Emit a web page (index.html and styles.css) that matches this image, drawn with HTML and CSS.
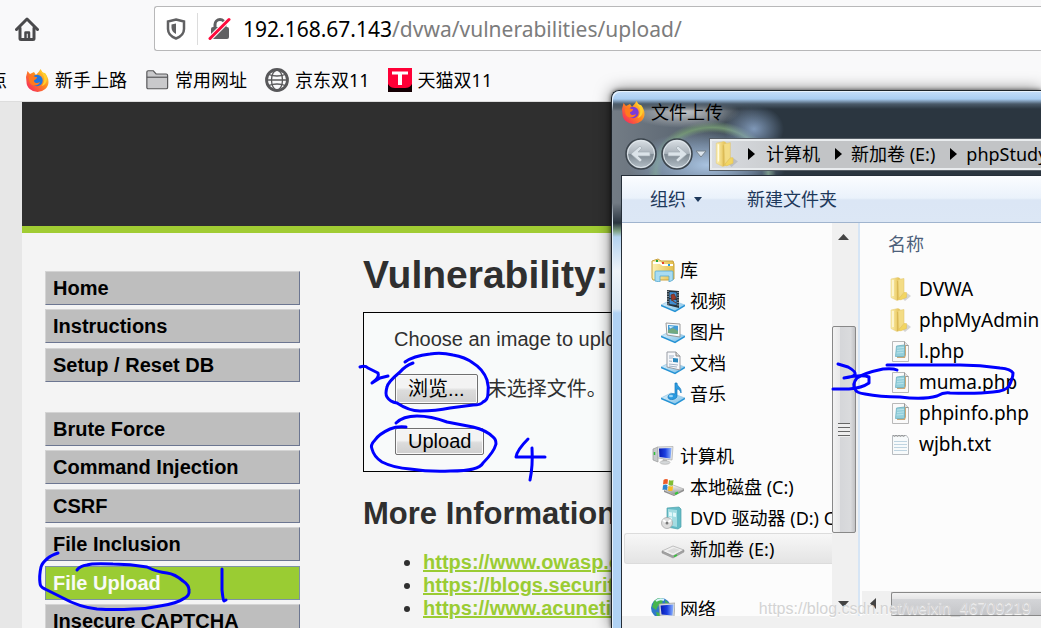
FILE: index.html
```html
<!DOCTYPE html>
<html lang="zh-CN">
<head>
<meta charset="utf-8">
<title>Vulnerability: File Upload</title>
<link rel="stylesheet" href="styles.css">
</head>
<body>
<svg class="defs" aria-hidden="true">
  <defs>
    <linearGradient id="gold" x1="0" x2="1"><stop offset="0" stop-color="#fdf1b4"/><stop offset="1" stop-color="#e3bd49"/></linearGradient>
    <linearGradient id="flame" x1="1" y1="0" x2="0" y2="1"><stop offset="0" stop-color="#ffec3d"/><stop offset=".45" stop-color="#ff8a1c"/><stop offset="1" stop-color="#f5156c"/></linearGradient>
    <linearGradient id="tray" x1="0" x2="1" y2="1"><stop offset="0" stop-color="#e8f6fd"/><stop offset="1" stop-color="#74bce6"/></linearGradient>
    <linearGradient id="screen" x1="0" x2="1"><stop offset="0" stop-color="#0719b0"/><stop offset=".5" stop-color="#1b3fe0"/><stop offset="1" stop-color="#8fb6ff"/></linearGradient>
    <linearGradient id="metal" x2="0" y2="1"><stop offset="0" stop-color="#f7f7f7"/><stop offset="1" stop-color="#909090"/></linearGradient>
    <linearGradient id="orb" x2="0" y2="1"><stop offset="0" stop-color="#dce2e7"/><stop offset=".48" stop-color="#a9b2ba"/><stop offset=".52" stop-color="#7e8992"/><stop offset="1" stop-color="#b9c4cc"/></linearGradient>
  </defs>
  <symbol id="i-folder" viewBox="0 0 24 24">
    <path d="M14 21l5-5 4 3-6 5z" fill="#999" opacity=".4"/>
    <path d="M3 2l7-1.500 2 1v21l-3 1-6-3z" fill="url(#gold)" stroke="#e3c970" stroke-width=".5"/>
    <path d="M10 2.500l6-1v14l-5 6z" fill="#f3dc85" stroke="#dfc268" stroke-width=".5"/>
    <path d="M9.500 4v19" stroke="#d9b854" fill="none"/>
    <path d="M11 21.500l5-6h2.500v5l-6 2.500z" fill="#f2d561" stroke="#e0bf57" stroke-width=".5"/>
    <path d="M5 3v16" stroke="#fffbe0" stroke-width="1.400"/>
  </symbol>
  <symbol id="i-php" viewBox="0 0 24 24">
    <path d="M4.500 2.500h12l4 4v16h-16z" fill="#fafafa" stroke="#b9b9b9"/>
    <path d="M16.500 2.500v4h4" fill="#e2e2e2" stroke="#999"/>
    <path d="M10 7l8-1v10l-1 3H9z" fill="#c9a878"/>
    <path d="M8.500 7l8-1v10.500l-1 1h-8z" fill="#93cfdb" stroke="#6fb1c2" stroke-width=".8"/>
    <path d="M9 9l7-.6M9 11.500l7-.6M8.500 14l7-.6" stroke="#b9e2ea"/>
  </symbol>
  <symbol id="i-txt" viewBox="0 0 24 24">
    <path d="M4.500 3.500h14l2 3v16h-16z" fill="#f7fafb" stroke="#b8bcc0"/>
    <path d="M5 3l1.500 2L8 3l1.500 2L11 3l1.500 2L14 3l1.500 2L17 3" fill="none" stroke="#888" stroke-width=".7"/>
    <path d="M6 9.500h13M6 12.500h13M6 15.500h13M6 18.500h13" stroke="#bfd4e1"/>
  </symbol>
  <symbol id="i-firefox" viewBox="0 0 24 24">
    <path d="M1 9L2.500 3 5 6l4-2 2 3 3-3.500L15.500 1 18 5l2 0c2 3 3.500 5 3.500 9a11 10 0 0 1-22 0z" fill="url(#flame)"/>
    <circle cx="12" cy="12.500" r="5.700" class="globe-core"/>
    <path d="M4 9c4-3 5 0 8 0 0 3-3 2-3 4 1 3 4 2 6 1-1 4-7 5-10 1-1-2-1-4-1-6z" fill="#ff7a1e"/>
    <path d="M14.500 3c6 4 6 11 2 15 6-1 7-10 3-13z" fill="#ffd02e"/>
  </symbol>
  <symbol id="i-tray" viewBox="0 0 24 24">
    <path d="M0 16l10-5 14 5-10 6z" fill="url(#tray)" stroke="#91c3e2" stroke-width=".7"/>
    <path d="M0 16.500l14 6 10-6" fill="none" stroke="#2593d5" stroke-width="1.500"/>
  </symbol>
</svg>

<header class="chrome">
  <div class="navbar">
    <button class="home" aria-label="主页">
      <svg width="24" height="24" viewBox="0 0 24 24" fill="none" stroke="#4a4a4c" stroke-width="3" stroke-linejoin="round" stroke-linecap="round"><path d="M1.500 12.500L12 2l10.500 10.500"/><path d="M5 11v10.500q0 1 1 1h12q1 0 1-1V11"/><path d="M10.500 22v-6.500h3.500V22" stroke-width="2.500"/></svg>
    </button>
    <div class="urlbar">
      <svg width="20" height="22" viewBox="0 0 20 22"><path d="M10 1.500L18 3.500V11c0 5-4 8-8 9.500C6 19 2 16 2 11V3.500z" fill="none" stroke="#606062" stroke-width="2.500"/><path d="M10 5.500V16c-3-1.500-4.500-3.500-4.500-6.500v-3z" fill="#606062"/></svg>
      <span class="divider"></span>
      <svg width="24" height="24" viewBox="0 0 24 24"><path d="M7 11V7.500a5 5 0 0 1 10 0V11" fill="none" stroke="#606062" stroke-width="3"/><rect x="3" y="10" width="18" height="12" rx="2" fill="#606062"/><path d="M2 21.500L21 2.500" stroke="#fff" stroke-width="5"/><path d="M2 21.500L21 2.500" stroke="#ff0a3c" stroke-width="3" stroke-linecap="round"/></svg>
      <div class="url" role="textbox" aria-label="地址" contenteditable="true" spellcheck="false"><b>192.168.67.143</b>/dvwa/vulnerabilities/upload/</div>
    </div>
  </div>
  <nav class="bookmarks">
    <a href="#" class="clipped">点</a>
    <a href="#"><svg class="ff-old" width="24" height="24"><use href="#i-firefox"/></svg>新手上路</a>
    <a href="#"><svg width="24" height="24" viewBox="0 0 26 24"><path d="M2 3.500Q2 2 3.500 2H9l3 3.500h11Q24.500 5.500 24.500 7v13q0 1.500-1.500 1.500H3.500Q2 21.500 2 20z" fill="#c9c9cb" stroke="#58585a" stroke-width="1.300"/><path d="M2 9h22.500" stroke="#58585a" stroke-width="1.300"/></svg>常用网址</a>
    <a href="#"><svg width="24" height="24" viewBox="0 0 24 24" fill="none" stroke="#58585a"><circle cx="12" cy="12" r="10.500" stroke-width="2.800"/><g stroke-width="1.300"><ellipse cx="12" cy="12" rx="5.500" ry="10"/><path d="M2 12h20M4 6.500c4 2 12 2 16 0M4 17.500c4-2 12-2 16 0"/></g></svg>京东双11</a>
    <a href="#"><svg width="24" height="24" viewBox="0 0 24 24"><path fill="#ff0036" d="M0 0h24v24H0z"/><path d="M0 16c2 3 4 4 7 4h10c3 0 5-1 7-4v8H0z" fill="#150003"/><path d="M4 3.500h16v3h-6V17h-4V6.500H4z" fill="#fff"/></svg>天猫双11</a>
  </nav>
</header>

<div class="site">
  <div class="banner"></div>
  <div class="columns">
    <nav class="menu">
      <ul>
        <li><a href="#">Home</a></li>
        <li><a href="#">Instructions</a></li>
        <li><a href="#">Setup / Reset DB</a></li>
      </ul>
      <ul>
        <li><a href="#">Brute Force</a></li>
        <li><a href="#">Command Injection</a></li>
        <li><a href="#">CSRF</a></li>
        <li><a href="#">File Inclusion</a></li>
        <li><a href="#" class="selected">File Upload</a></li>
        <li><a href="#">Insecure CAPTCHA</a></li>
      </ul>
    </nav>
    <main class="content">
      <h1>Vulnerability:</h1>
      <form class="upload" onsubmit="return false">
        <p>Choose an image to upload:</p>
        <div class="picker"><button type="button" id="browse">浏览...</button><label for="browse">未选择文件。</label></div>
        <button class="submit">Upload</button>
      </form>
      <h2>More Information</h2>
      <ul class="links">
        <li><a href="#">https://www.owasp.org</a></li>
        <li><a href="#">https://blogs.securiteam.com</a></li>
        <li><a href="#">https://www.acunetix.com</a></li>
      </ul>
    </main>
  </div>
</div>

<section class="dialog" role="dialog" aria-labelledby="dlg-title">
  <div class="glass-blur"></div>
  <div class="titlebar"><svg width="24" height="24"><use href="#i-firefox"/></svg><span id="dlg-title">文件上传</span></div>
  <div class="addressrow">
    <button class="orb" aria-label="后退"><svg width="32" height="32" viewBox="0 0 32 32"><circle cx="16" cy="16" r="15" fill="url(#orb)" stroke="#3b444c" stroke-width="1.500"/><circle cx="16" cy="16" r="13.500" fill="none" stroke="#dfe6eb"/><path d="M6 16l9-8 2 2-4 4h12v4H13l4 4-2 2z" fill="#dbe3e9" stroke="#a3adb5" stroke-width=".7"/></svg></button>
    <button class="orb" aria-label="前进"><svg width="32" height="32" viewBox="0 0 32 32"><circle cx="16" cy="16" r="15" fill="url(#orb)" stroke="#3b444c" stroke-width="1.500"/><circle cx="16" cy="16" r="13.500" fill="none" stroke="#dfe6eb"/><path d="M26 16l-9-8-2 2 4 4H7v4h12l-4 4 2 2z" fill="#dbe3e9" stroke="#a3adb5" stroke-width=".7"/></svg></button>
    <svg class="recent" width="12" height="8" viewBox="0 0 12 8"><path d="M1 1h10L6 7z" fill="#dce4ec" stroke="#77838d"/></svg>
    <div class="crumbs">
      <svg width="28" height="26" viewBox="0 0 24 24"><use href="#i-folder"/></svg>
      <i></i><button>计算机</button><i></i><button>新加卷 (E:)</button><i></i><button>phpStudy</button>
    </div>
  </div>
  <div class="client">
    <div class="commands"><button>组织<svg width="8" height="5" viewBox="0 0 8 5"><path d="M0 0h8L4 5z" fill="#1e395b"/></svg></button><button>新建文件夹</button></div>
    <div class="panes">
      <div class="tree">
        <a href="#" class="root"><svg width="24" height="24" viewBox="0 0 24 24"><path d="M1 3l6-2 3 2h12l1 3v15l-3 1H2l-1-2z" fill="url(#gold)" stroke="#c9a23f"/><path d="M2 5h7l3 2h10" stroke="#fff" stroke-width="2"/><path d="M5 2h2v2H5z" fill="#21a43b"/><path d="M11 4h2v2h-2z" fill="#e6422d"/><path d="M17 6h2v2h-2z" fill="#259de1"/><path d="M4 14q0-1 1-1h16q1 0 1 1v8l-4 2v-6H9v6l-5-1z" fill="#a9dcf2" stroke="#55a8d2" stroke-width=".8"/></svg>库</a>
        <a href="#"><svg width="24" height="24" viewBox="0 0 24 24"><use href="#i-tray"/><path d="M6 1l12 1v17L6 16z" fill="#26323b"/><path d="M8.500 3l7 .5v6l-7-.5zM8.500 10l7 1v5l-7-1z" fill="#3f8ed3"/><path d="M10 6l3-1 2 4-4 3zM12 12l3 2" fill="#9b3b2b" stroke="#72362b"/><path d="M7 2v14M17 3v15" stroke="#dde9ee" stroke-dasharray="1 1.500"/></svg>视频</a>
        <a href="#"><svg width="24" height="24" viewBox="0 0 24 24"><use href="#i-tray"/><path d="M5 3l14 1v13L6 15z" fill="#f8fafb" stroke="#999"/><path d="M7 5l10 .7V14L7 13z" fill="#419bd6"/><path d="M7 10l5-2 5 3v3L7 13z" fill="#72a980"/><path d="M8 6l5 .5-4 2z" fill="#d4effb"/></svg>图片</a>
        <a href="#"><svg width="24" height="24" viewBox="0 0 24 24"><use href="#i-tray"/><path d="M6 1h9l4 4v14L6 16z" fill="#f7f8fb" stroke="#999da5"/><path d="M15 1v4h4" fill="#ddd" stroke="#888"/><path d="M8 5h5M8 7h4M8 10l3 .3M8 13l9 1M8 15l8 1" stroke="#8aa0b8" stroke-width=".8"/><path d="M12 7l5 .5v4l-5-.5z" fill="#2b88bd"/></svg>文档</a>
        <a href="#"><svg width="24" height="24" viewBox="0 0 24 24"><use href="#i-tray"/><path d="M14 1h2c0 4 5 4 4 10-1-3-2-4-4-4v7c0 4-9 5-9 1 0-3 4-4 7-3z" fill="#2c9be0" stroke="#1678bc" stroke-width=".7"/><ellipse cx="10" cy="14" rx="2" ry="1.200" fill="#9bd7fa"/></svg>音乐</a>
        <a href="#" class="root group"><svg width="24" height="24" viewBox="0 0 24 24"><path d="M2 5l5-2v15l-5-2z" fill="#c5c9cb" stroke="#999" stroke-width=".7"/><path d="M3.500 8v3" stroke="#2fbf3a" stroke-width="1.500"/><path d="M6.500 3L22 2.500 21 16 7 14z" fill="#e3e6e8" stroke="#aaa" stroke-width=".7"/><path d="M8 4.500L20.500 4l-1 10.500L8.500 13z" fill="url(#screen)"/><path d="M12 15l4 .5v3H11z" fill="#bbb"/><ellipse cx="14" cy="18.500" rx="5" ry="1.800" fill="#d5d8da" stroke="#aaa" stroke-width=".6"/></svg>计算机</a>
        <a href="#"><svg width="24" height="24" viewBox="0 0 24 24"><path d="M3 14l9-4 11 4-10 6z" fill="url(#metal)" stroke="#aaa" stroke-width=".7"/><path d="M3 15v2l10 4 10-5v-2l-10 6z" fill="#8f8f8f"/><path d="M14 19l3-1.500" stroke="#35c63a" stroke-width="2"/><path d="M2.500 5q2-1.500 4.500-.500L6.500 9Q4 8.500 2 9.500z" fill="#ed5b28"/><path d="M8 5q2 1 4.500 0l-.5 5q-2 1-4.500 0z" fill="#80bd35"/><path d="M2 10.500q2-1.500 4.500-.500L6 15q-2.500-1-4.500 0z" fill="#2c86d1"/><path d="M7.500 11q2 1 4.500 0l-.5 4.500q-2 1-4.500 0z" fill="#f9bd22"/></svg>本地磁盘 (C:)</a>
        <a href="#"><svg width="24" height="24" viewBox="0 0 24 24"><path d="M6 2l12-1 2 2v18l-3 2-11-2z" fill="#65bcc7" stroke="#4da0ab" stroke-width=".7"/><path d="M7 3l9 1v17l-9-2z" fill="#a3dce2"/><path d="M8 6l3 .4v4l-3-.4zM12 6.500l3 .4v4l-3-.4zM8 11l3 .4v4l-3-.4z" fill="#dff8fa"/><circle cx="6" cy="17" r="5.500" fill="#dedede" stroke="#a1a1a1" stroke-width=".7"/><path d="M6 17L2 14M6 17l4-3" stroke="#fff" stroke-width="2"/><circle cx="6" cy="17" r="1.500" fill="#777"/></svg>DVD 驱动器 (D:) CD</a>
        <a href="#" class="current"><svg width="24" height="24" viewBox="0 0 24 24"><path d="M1 14l11-5 11 4-11 6z" fill="#efefef" stroke="#aaa" stroke-width=".7"/><path d="M1 14v2l11 5 11-6v-2l-11 6z" fill="#a3a3a3" stroke="#888" stroke-width=".5"/><path d="M6 14l7-3 6 2-7 3.500z" fill="#dcdcdc"/><path d="M13 19.500l3-1.500" stroke="#35c63a" stroke-width="1.500"/></svg>新加卷 (E:)</a>
        <a href="#" class="root group"><svg width="24" height="24" viewBox="0 0 24 24"><circle cx="10" cy="11" r="10" fill="#2f78c9"/><path d="M3 4q5-5 9-2l-1 5-4 2-2 4-4-3zM14 3l5 4-4 3zM5 15l4 1 2 5-5-2z" fill="#45b54e"/><path d="M5 4q4-3 8-1" stroke="#d8f6fc" stroke-width="2" fill="none"/><path d="M8 7l16-1-1 14-14-1z" fill="#d9dddf" stroke="#999" stroke-width=".7"/><path d="M9.500 8.500L22.500 7.500l-1 11-11-1z" fill="url(#screen)"/><path d="M14 20h4v2h-5z" fill="#aaa"/></svg>网络</a>
      </div>
      <div class="vscroll"><svg width="12" height="7" viewBox="0 0 12 7"><path d="M0 6h11L5.500 0z" fill="#444"/></svg><div class="thumb"><i></i></div><svg width="12" height="7" viewBox="0 0 12 7"><path d="M0 0h11L5.500 6z" fill="#444"/></svg></div>
      <div class="files">
        <div class="colhead">名称</div>
        <ul>
          <li><svg width="24" height="24"><use href="#i-folder"/></svg>DVWA</li>
          <li><svg width="24" height="24"><use href="#i-folder"/></svg>phpMyAdmin</li>
          <li><svg width="24" height="24"><use href="#i-php"/></svg>l.php</li>
          <li><svg width="24" height="24"><use href="#i-php"/></svg>muma.php</li>
          <li><svg width="24" height="24"><use href="#i-php"/></svg>phpinfo.php</li>
          <li><svg width="24" height="24"><use href="#i-txt"/></svg>wjbh.txt</li>
        </ul>
        <div class="hscroll"><svg width="7" height="12" viewBox="0 0 7 12"><path d="M6 0v11L0 5.500z" fill="#444"/></svg><div class="thumb"></div></div>
      </div>
    </div>
    <div class="footer"></div>
  </div>
</section>

<svg class="ink" width="1041" height="628" viewBox="0 0 1041 628" aria-hidden="true">
  <path d="M58 553Q50 556 48 558Q42 563 41 567Q39 576 40 583Q40 587 45 589L63 598Q79 607 97 609Q115 610 133 609Q147 609 160 606Q178 603 183 599Q190 596 189 590Q189 585 183 581Q175 574 167 573Q157 572 147 567Q130 564 113 564Q92 563 87 565Q80 566 77 570"/>
  <path d="M222 569L222 590Q223 600 224 601L226 600"/>
  <path d="M360 367Q365 365 368 368L378 373Q380 377 372 383L380 378L388 376"/>
  <path d="M413 363Q405 366 400 372Q388 382 387 387Q385 394 387 397Q390 402 397 403Q409 411 420 411Q436 411 450 408L473 405Q481 405 483 402Q488 400 488 393Q489 387 487 380Q483 369 473 363Q465 357 453 355Q441 352 430 354Q413 356 405 362"/>
  <path d="M406 427Q397 426 390 429Q379 434 375 440Q370 445 372 449Q374 457 382 462Q394 468 410 469Q430 472 450 471Q466 471 473 469Q481 467 483 463Q494 452 496 444Q496 439 493 437Q486 430 473 427L447 422Q431 416 417 416Q403 416 396 423"/>
  <path d="M528 439Q517 450 516 457L545 457M532 448Q533 466 530 480"/>
  <path d="M838 364L848 367Q864 376 844 378Q862 374 869 377V383Q862 388 849 389H833"/>
  <path d="M897 370Q893 368 883 369Q864 373 857 378Q852 384 855 389Q856 393 865 394Q880 397 900 397Q923 400 937 396Q944 392 950 393Q977 394 993 392Q1006 391 1009 386Q1013 378 1013 373Q1011 369 1000 368Q980 365 960 365H887"/>
</svg>
<div class="watermark">https://blog.csdn.net/weixin_46709219</div>
</body>
</html>
```
FILE: styles.css
```css
* { box-sizing: border-box; }
html, body { height: 100%; }
body {
  margin: 0;
  position: relative;
  display: flex;
  flex-direction: column;
  overflow: hidden;
  background: #e7e7e7;
  color: #000;
  font: 18px/24px "Noto Sans", "Noto Sans CJK SC", sans-serif;
}
svg { display: block; flex: none; }
a { color: inherit; text-decoration: none; }
button { border: 0; padding: 0; background: none; font: inherit; color: inherit; white-space: nowrap; }
ul { margin: 0; padding: 0; list-style: none; }
.defs { position: absolute; width: 0; height: 0; }
.globe-core { fill: var(--globe, #7a3bd8); }
.ff-old { --globe: #2177e0; }

/* Browser toolbar */
.chrome { flex: none; background: #f9f9fa; border-bottom: 1px solid #ddd; }
.navbar { display: flex; align-items: center; padding: 6px 0 0 15px; }
.home { margin-right: 115px; }
.urlbar {
  flex: 1;
  display: flex;
  align-items: center;
  height: 45px;
  padding-left: 11px;
  background: #fff;
  border: 1px solid #b8b8b9;
  border-right: 0;
  border-radius: 3px 0 0 3px;
}
.divider { width: 1px; height: 32px; margin: 0 10px 0 11px; background: #dcdcdc; }
.url { margin-left: 11px; color: #7c7c7c; font-size: 21px; line-height: 30px; white-space: nowrap; }
.url b { color: #000; font-weight: 400; }
.bookmarks { display: flex; align-items: center; gap: 18px; height: 50px; padding-top: 8px; }
.bookmarks a { display: flex; align-items: center; gap: 6px; white-space: nowrap; }
.bookmarks .clipped { margin-left: -11px; }

/* Site */
.site {
  flex: 1;
  min-height: 0;
  overflow: hidden;
  margin-left: 22px;
  background: #f4f4f4;
  color: #2f2f2f;
  font: 20px/23px "Liberation Sans", Arial, "Noto Sans CJK SC", sans-serif;
}
.banner { height: 131px; background: #2f2f2f; border-bottom: 7px solid #a1cc33; }
.columns { display: flex; padding-left: 23px; }
.menu { flex: none; width: 255px; padding-top: 38px; margin-right: 63px; }
.menu ul { margin-bottom: 30px; }
.menu li { margin-bottom: 4px; }
.menu li:nth-child(even) { margin-bottom: 5px; }
.menu li:last-child { margin-bottom: 0; }
.menu a {
  display: block;
  height: 34px;
  padding: 5px 7px 4px;
  background: #bebebe;
  border: 1px solid;
  border-color: #d4d4d4 #6c7691 #6c7691 #d4d4d4;
  color: #000;
  font-weight: 700;
}
.menu .selected { background: #9acc33; border-color: #7c92a4; color: #f8faf6; }
.content { flex: 1; min-width: 0; }
.content h1 { margin: 20px 0 15px; font-size: 39px; line-height: 44px; }
.upload { height: 160px; padding: 15px 30px; background: #f8fafa; border: 1px solid #000; }
.upload p { margin: 0 0 23px; }
.picker { display: flex; align-items: center; gap: 9px; height: 30px; margin-bottom: 24px; }
.upload button {
  height: 30px;
  padding: 0 12px;
  margin-left: 1px;
  border: 1px solid #707070;
  border-radius: 2px;
  background: linear-gradient(#f3f3f3 45%, #dcdcdc 55%, #cfcfcf);
  box-shadow: inset 0 0 0 1px #fafafa;
  color: #000;
  line-height: 26px;
}
.upload .submit { display: block; height: 27px; line-height: 23px; }
.content h2 { margin: 24px 0 19px; font-size: 31px; line-height: 36px; }
.links { padding-left: 60px; list-style: disc; }
.links a { color: #9acc33; font-weight: 700; text-decoration: underline; }

/* File chooser window */
.dialog {
  position: absolute;
  inset: 90px 0 0 611px;
  overflow: hidden;
  display: flex;
  flex-direction: column;
  padding-left: 9px;
  border: 1px solid #1d2329;
  border-width: 1px 0 0 1px;
  border-radius: 8px 0 0 0;
  background: linear-gradient(#c5defa 0, #a9cdf2 8px, #4a5a69 13px, #2b3640 18px, #2b3640 132px, #7ea183 140px, #b3d2ef 146px, #eef3f8 180px, #dae7f4 218px, #b0d2f4 222px);
  box-shadow: 0 0 4px rgba(0, 0, 0, .6), 0 0 16px rgba(0, 0, 0, .5);
}
.dialog::before { content: ""; position: absolute; inset: 0; border-radius: inherit; box-shadow: inset 1px 1px #e6f1fc; }
.glass-blur {
  position: absolute;
  inset: 12px 0 auto 0;
  height: 120px;
  background:
    radial-gradient(ellipse 56px 16px at 72px 9px, #c2c4c6, rgba(160, 165, 170, .6) 60%, transparent),
    radial-gradient(ellipse 30px 24px at 142px 26px, rgba(136, 162, 196, .9), transparent),
    radial-gradient(ellipse 80px 34px at 95px 62px, #a9c3e0, rgba(140, 165, 195, .6) 60%, transparent),
    radial-gradient(ellipse 64px 54px at 100px 72px, transparent 78%, #729373 88%, transparent),
    linear-gradient(90deg, #737c85, #5d6874 70px, transparent 150px);
  mask: linear-gradient(transparent, #000 8px, #000 100px, transparent);
}
.titlebar, .addressrow, .client { position: relative; }
.titlebar { display: flex; align-items: center; gap: 6px; height: 42px; }
.addressrow { display: flex; align-items: center; height: 42px; padding-left: 4px; }
.orb { margin-right: 4px; }
.recent { margin: 0 3px 0 -2px; }
.crumbs {
  flex: 1;
  display: flex;
  align-items: center;
  height: 31px;
  overflow: hidden;
  background: linear-gradient(90deg, #d9dce0, #c2c4c6 100px);
  border: 2px solid #e9ecee;
  border-right: 0;
  outline: 1px solid #555d65;
}
.crumbs i { flex: none; margin: 0 9px 0 15px; border: solid transparent; border-width: 6px 0 6px 7px; border-left-color: #000; }
.crumbs svg + i { margin-left: 8px; margin-right: 11px; }
.client {
  flex: 1;
  min-height: 0;
  display: flex;
  flex-direction: column;
  border: 1px solid #252e38;
  border-width: 1px 0 0 1px;
  background: #fcfcfc;
}
.commands {
  flex: none;
  display: flex;
  align-items: center;
  gap: 45px;
  height: 47px;
  padding-left: 28px;
  background: linear-gradient(#fbfdff, #eaf2fb 48%, #dbe6f5 52%, #dce7f5);
  border-bottom: 1px solid #a0b4ce;
  color: #1e395b;
}
.commands button { display: flex; align-items: center; gap: 8px; }
.panes { flex: 1; min-height: 0; display: flex; }
.tree { width: 210px; overflow: hidden; padding: 31px 0 0 2px; }
.tree a { display: flex; align-items: center; gap: 5px; height: 31px; padding-left: 36px; border: 1px solid transparent; white-space: nowrap; }
.tree .root { padding-left: 26px; }
.tree .group { margin-top: 31px; }
.tree .current { border-color: #dcdcdc; border-right: 0; border-radius: 3px 0 0 3px; background: linear-gradient(#f7f7f7, #e4e4e4); }
.tree .current + .group { margin-top: 29px; }
.vscroll {
  width: 28px;
  display: flex;
  flex-direction: column;
  align-items: center;
  padding: 11px 2px 8px 0;
  background: #f0f0f0;
  border-right: 2px solid #d6e5f5;
}
.vscroll .thumb {
  align-self: stretch;
  height: 207px;
  margin: 85px 0 auto;
  display: grid;
  place-items: center;
  border: 1px solid #888;
  border-radius: 2px;
  background: linear-gradient(90deg, #f2f2f2, #e8e8e9 30%, #d5d6d9 32%, #dadbdd 80%, #c0c1c4);
}
.vscroll i { width: 12px; height: 14px; background: repeating-linear-gradient(#666 0 1px, #eee 1px 4px); }
.files { flex: 1; min-width: 0; display: flex; flex-direction: column; padding-left: 2px; }
.colhead { height: 50px; padding: 9px 0 0 26px; color: #4c607a; }
.files ul { flex: 1; }
.files li { display: flex; align-items: center; gap: 7px; height: 31px; padding-left: 26px; font-size: 19px; white-space: nowrap; }
.hscroll { display: flex; align-items: center; gap: 14px; height: 25px; padding-left: 8px; background: #f0f0f0; }
.hscroll .thumb { flex: 1; height: 24px; border: 1px solid #888; border-right: 0; border-radius: 2px 0 0 2px; background: linear-gradient(#f2f2f2, #e6e6e7 25%, #d4d5d8 28%, #c4c5c8); }
.footer { height: 12px; flex: none; background: #f0f0f0; }

/* Hand-drawn marks */
.ink { position: absolute; inset: 0 auto auto 0; pointer-events: none; fill: none; stroke: #00f; stroke-width: 3; stroke-linecap: round; stroke-linejoin: round; }
.watermark {
  position: absolute;
  right: 10px;
  bottom: 8px;
  color: #d3d3d3;
  font: 16px/22px "Liberation Sans", Arial, sans-serif;
  text-shadow: 0 1px 1px #fff;
}
```
